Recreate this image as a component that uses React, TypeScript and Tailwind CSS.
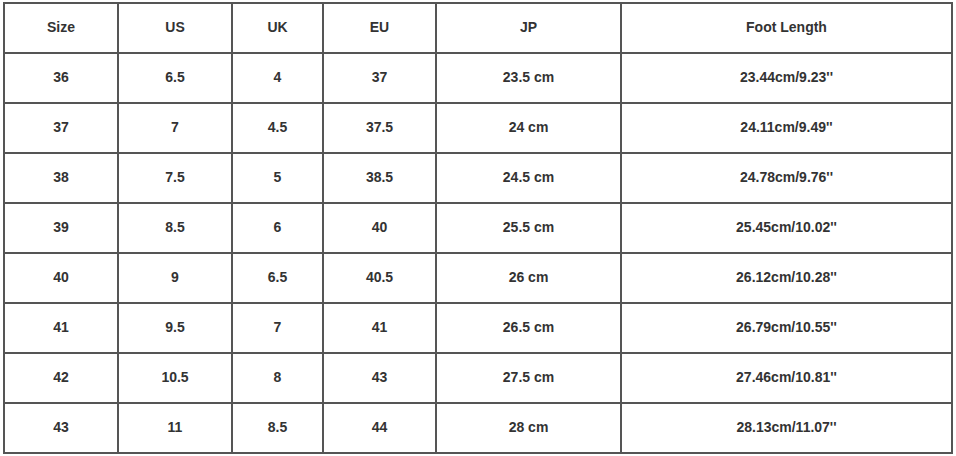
const HEADERS = ["Size", "US", "UK", "EU", "JP", "Foot Length"];

const ROWS = [
  ["36", "6.5", "4", "37", "23.5 cm", "23.44cm/9.23''"],
  ["37", "7", "4.5", "37.5", "24 cm", "24.11cm/9.49''"],
  ["38", "7.5", "5", "38.5", "24.5 cm", "24.78cm/9.76''"],
  ["39", "8.5", "6", "40", "25.5 cm", "25.45cm/10.02''"],
  ["40", "9", "6.5", "40.5", "26 cm", "26.12cm/10.28''"],
  ["41", "9.5", "7", "41", "26.5 cm", "26.79cm/10.55''"],
  ["42", "10.5", "8", "43", "27.5 cm", "27.46cm/10.81''"],
  ["43", "11", "8.5", "44", "28 cm", "28.13cm/11.07''"],
];

function Cell({ children }: { children: React.ReactNode }) {
  return (
    <div className="h-[50px] pb-[2px] flex items-center justify-center border-r-2 border-b-2 border-[#555555] text-[14px] font-bold text-[#333333]">
      {children}
    </div>
  );
}

export default function App() {
  return (
    <div className="w-[956px] h-[456px] bg-white pt-[2px] pl-[3px] font-['Liberation_Sans',Arial,sans-serif]">
      <div className="w-max grid grid-cols-[114px_114px_91px_113px_185px_331px] border-l-2 border-t-2 border-[#555555]">
        {HEADERS.map((h) => (
          <Cell key={h}>{h}</Cell>
        ))}
        {ROWS.map((row) =>
          row.map((v, i) => <Cell key={row[0] + "-" + i}>{v}</Cell>)
        )}
      </div>
    </div>
  );
}
